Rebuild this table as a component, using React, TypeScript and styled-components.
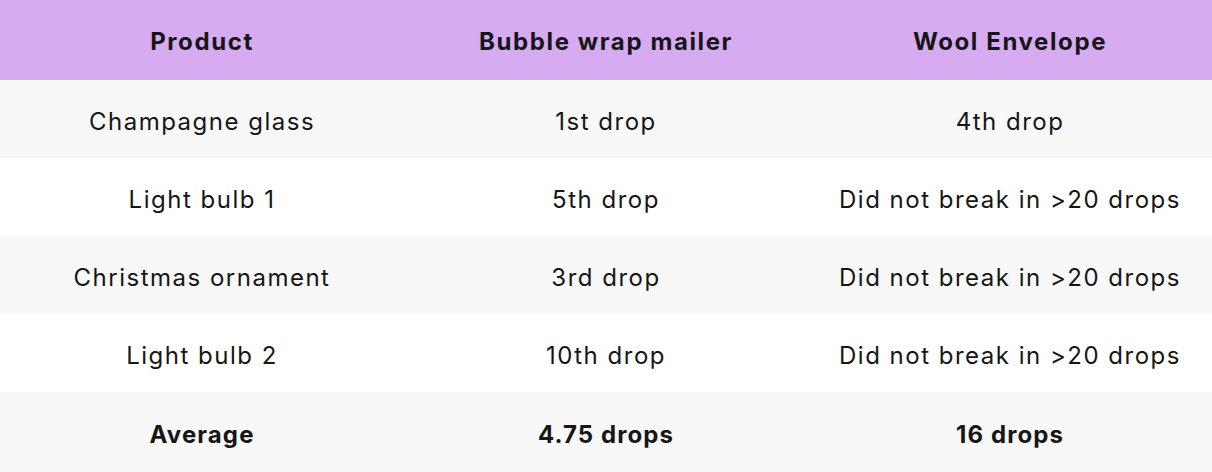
import styled, { createGlobalStyle } from 'styled-components';

const GlobalStyle = createGlobalStyle`
  html, body {
    margin: 0;
    padding: 0;
    background: #ffffff;
  }
  body {
    font-family: 'Inter', 'Liberation Sans', sans-serif;
    color: #161616;
  }
`;

const StyledTable = styled.table`
  width: 1212px;
  border-collapse: collapse;
  table-layout: fixed;
`;

const HeaderCell = styled.th`
  height: 78px;
  padding: 2px 0 0;
  background-color: #d6abf2;
  font-size: 24px;
  font-weight: 700;
  letter-spacing: 1.6px;
  text-align: center;
`;

const Row = styled.tr<{ $shaded: boolean; $tall?: boolean }>`
  height: ${({ $tall }) => ($tall ? '80px' : '78px')};
  background-color: ${({ $shaded }) => ($shaded ? '#f8f8f8' : '#ffffff')};
`;

const Cell = styled.td<{ $bold?: boolean }>`
  padding: 4px 0 0;
  font-size: 24px;
  font-weight: ${({ $bold }) => ($bold ? 700 : 400)};
  letter-spacing: ${({ $bold }) => ($bold ? '1.1px' : '1.5px')};
  text-align: center;
`;

const headers = ['Product', 'Bubble wrap mailer', 'Wool Envelope'];

const rows = [
  ['Champagne glass', '1st drop', '4th drop'],
  ['Light bulb 1', '5th drop', 'Did not break in >20 drops'],
  ['Christmas ornament', '3rd drop', 'Did not break in >20 drops'],
  ['Light bulb 2', '10th drop', 'Did not break in >20 drops'],
];

const average = ['Average', '4.75 drops', '16 drops'];

export default function App() {
  return (
    <>
      <GlobalStyle />
      <StyledTable>
        <thead>
          <tr>
            {headers.map((h) => (
              <HeaderCell key={h}>{h}</HeaderCell>
            ))}
          </tr>
        </thead>
        <tbody>
          {rows.map((row, i) => (
            <Row key={row[0]} $shaded={i % 2 === 0}>
              {row.map((c, j) => (
                <Cell key={j}>{c}</Cell>
              ))}
            </Row>
          ))}
          <Row $shaded $tall>
            {average.map((c) => (
              <Cell key={c} $bold>{c}</Cell>
            ))}
          </Row>
        </tbody>
      </StyledTable>
    </>
  );
}
